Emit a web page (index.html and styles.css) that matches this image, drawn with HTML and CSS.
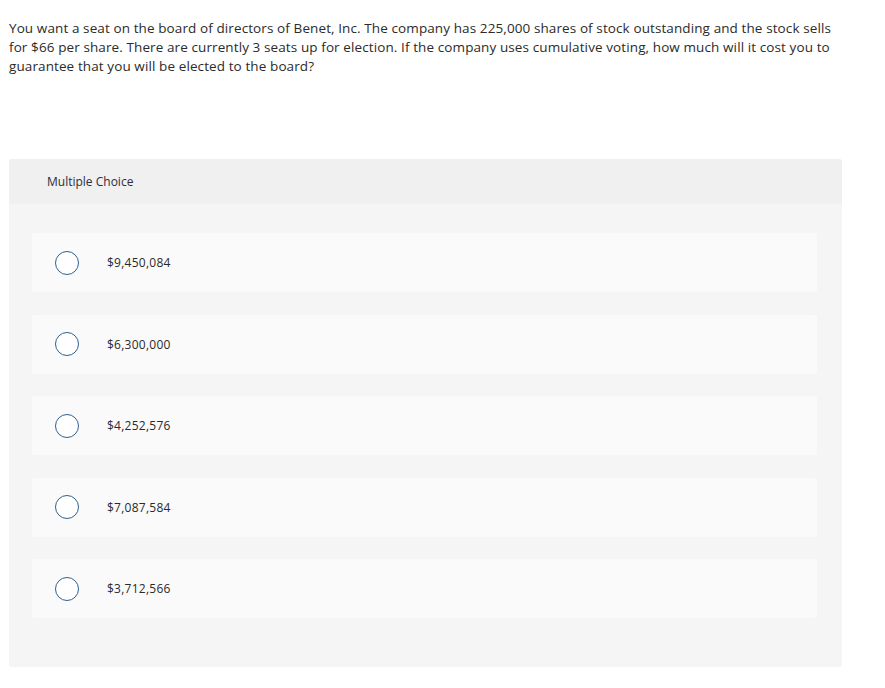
FILE: index.html
```html
<!DOCTYPE html>
<html>
<head>
<meta charset="utf-8">
<link rel="stylesheet" href="styles.css">
</head>
<body>
<p class="question">You want a seat on the board of directors of Benet, Inc. The company has 225,000 shares of stock outstanding and the stock sells for $66 per share. There are currently 3 seats up for election. If the company uses cumulative voting, how much will it cost you to guarantee that you will be elected to the board?</p>
<div class="panel">
  <div class="panel-head">Multiple Choice</div>
  <div class="panel-body">
    <div class="option"><span class="radio"></span><span class="label">$9,450,084</span></div>
    <div class="option"><span class="radio"></span><span class="label">$6,300,000</span></div>
    <div class="option"><span class="radio"></span><span class="label">$4,252,576</span></div>
    <div class="option"><span class="radio"></span><span class="label">$7,087,584</span></div>
    <div class="option"><span class="radio"></span><span class="label">$3,712,566</span></div>
  </div>
</div>
</body>
</html>
```
FILE: styles.css
```css
html, body {
  margin: 0;
  padding: 0;
  background: #ffffff;
}
body {
  padding: 0 9px;
  font-family: "Open Sans", Lato, sans-serif;
  color: #333333;
}
.question {
  margin: 0;
  padding-top: 18.5px;
  font-size: 13.5px;
  letter-spacing: 0.1px;
  line-height: 19px;
  width: 830px;
  color: #2b2b2b;
}
.panel {
  margin-top: 83.5px;
  width: 833px;
  border-radius: 3px;
  overflow: hidden;
  background: #f5f5f5;
}
.panel-head {
  background: #f0f0f0;
  height: 45px;
  display: flex;
  align-items: center;
  padding-left: 38px;
  font-size: 12px;
  color: #2d2d3a;
}
.panel-body {
  padding: 29px 25px 49px 23px;
  display: flex;
  flex-direction: column;
  gap: 22.5px;
}
.option {
  height: 59px;
  background: #fafafa;
  border-radius: 3px;
  display: flex;
  align-items: center;
  padding-left: 23px;
}
.radio {
  width: 22px;
  height: 22px;
  border: 1.5px solid #2f5f8e;
  border-radius: 50%;
  background: #ffffff;
  flex: none;
}
.label {
  margin-left: 28px;
  font-size: 12px;
  letter-spacing: 0.25px;
  color: #2a2a2a;
}
```
